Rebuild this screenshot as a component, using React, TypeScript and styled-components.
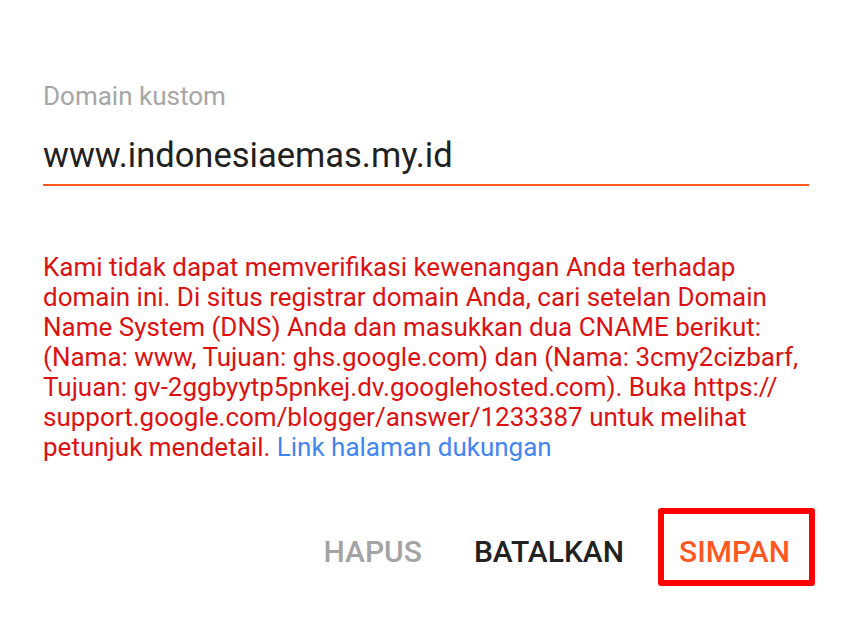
import React from 'react';
import styled, { createGlobalStyle } from 'styled-components';

const GlobalStyle = createGlobalStyle`
  html, body {
    margin: 0;
    padding: 0;
    background: #ffffff;
  }
  body {
    font-family: Roboto, "Noto Sans", Arial, sans-serif;
  }
`;

const Dialog = styled.div`
  width: 853px;
  height: 622px;
  box-sizing: border-box;
  padding: 81px 38px 0 43px;
  display: flex;
  flex-direction: column;
`;

const Field = styled.div`
  width: 766px;
  display: flex;
  flex-direction: column;
`;

const Label = styled.label`
  font-size: 26px;
  line-height: 30px;
  color: #a6a6a6;
`;

const Input = styled.input`
  margin-top: 24px;
  border: none;
  border-bottom: 2px solid #ff5722;
  outline: none;
  padding: 0 0 9px 0;
  font-family: inherit;
  font-size: 34.5px;
  line-height: 40px;
  height: 40px;
  color: #212121;
  background: transparent;
`;

const ErrorText = styled.p`
  margin: 66px 0 0 0;
  width: 766px;
  font-size: 26px;
  line-height: 30px;
  color: #dd1111;
`;

const HelpLink = styled.a`
  color: #4285f4;
  text-decoration: none;
`;

const Actions = styled.div`
  margin-top: 46px;
  display: flex;
  justify-content: flex-end;
  align-items: center;
  gap: 16px;
`;

const ActionButton = styled.button<{ $tone: 'muted' | 'plain' | 'primary' }>`
  border: none;
  background: transparent;
  font-family: inherit;
  font-weight: 500;
  font-size: 30px;
  padding: 8px ${p => (p.$tone === 'primary' ? '19px 0 15px' : '18px 0')};
  height: 66px;
  box-sizing: border-box;
  text-transform: uppercase;
  cursor: pointer;
  color: ${p =>
    p.$tone === 'muted' ? '#a3a3a3' : p.$tone === 'primary' ? '#ff5722' : '#222222'};
`;

const Highlight = styled.div`
  border: 6px solid #ff0000;
  border-radius: 3px;
  display: flex;
  align-items: center;
`;

export default function App() {
  return (
    <>
      <GlobalStyle />
      <Dialog>
        <Field>
          <Label>Domain kustom</Label>
          <Input defaultValue="www.indonesiaemas.my.id" />
        </Field>
        <ErrorText>
          Kami tidak dapat memverifikasi kewenangan Anda terhadap domain ini. Di situs
          registrar domain Anda, cari setelan Domain Name System (DNS) Anda dan masukkan dua
          CNAME berikut: (Nama: www, Tujuan: ghs.google.com) dan (Nama: 3cmy2cizbarf, Tujuan:
          gv-2ggbyytp5pnkej.dv.googlehosted.com). Buka https://
          support.google.com/blogger/answer/1233387 untuk melihat petunjuk mendetail.{' '}
          <HelpLink href="#">Link halaman dukungan</HelpLink>
        </ErrorText>
        <Actions>
          <ActionButton $tone="muted">Hapus</ActionButton>
          <ActionButton $tone="plain">Batalkan</ActionButton>
          <Highlight>
            <ActionButton $tone="primary">Simpan</ActionButton>
          </Highlight>
        </Actions>
      </Dialog>
    </>
  );
}
